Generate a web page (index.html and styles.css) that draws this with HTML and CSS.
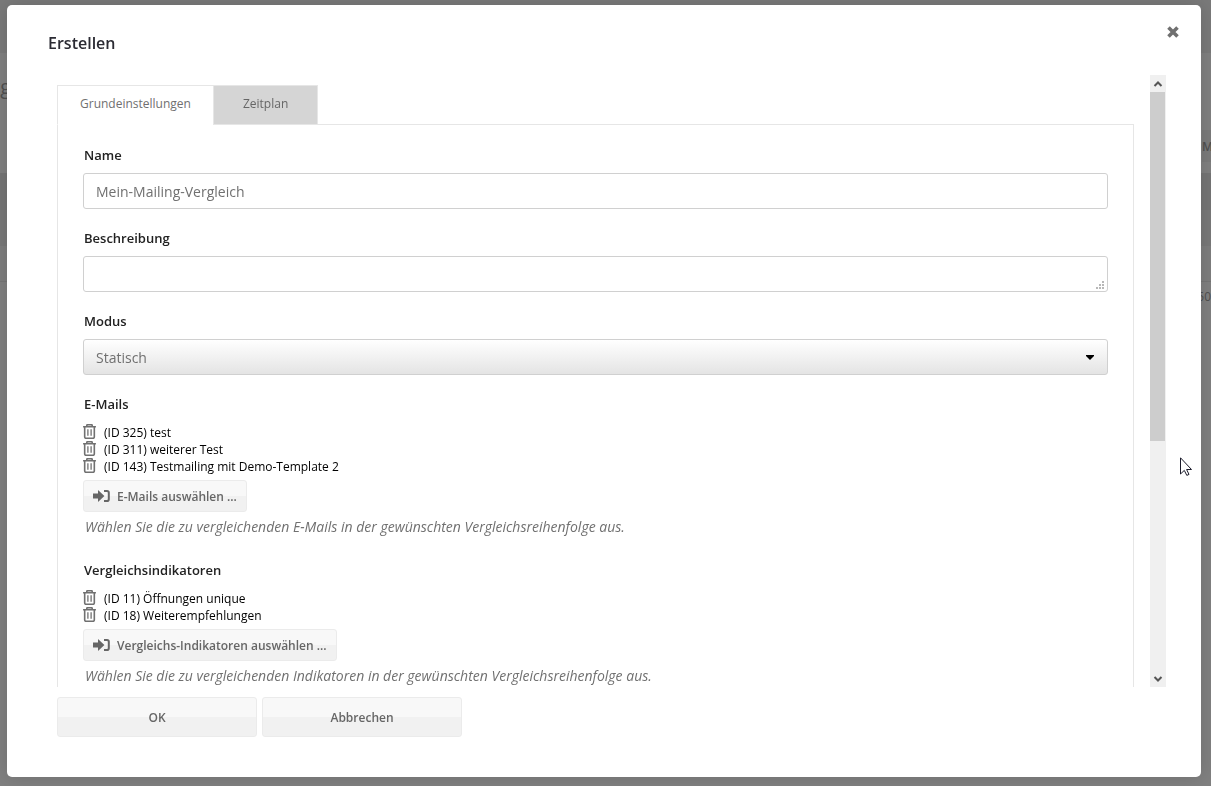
FILE: index.html
```html
<!DOCTYPE html>
<html lang="de">

<head>
    <meta charset="UTF-8">
    <meta name="viewport" content="width=device-width, initial-scale=1.0">
    <title>Erstellen</title>
    <link rel="stylesheet" href="styles.css">
</head>

<body>
    <!-- icons -->
    <svg class="sprite" aria-hidden="true">
        <symbol id="icon-trash" viewBox="0 0 12 14">
            <path d="M0 2.500h12M3.500 2.500V1.200Q3.500.7 4 .7h4q.5 0 .5.5v1.300M1.500 2.500v9.700q0 1.100 1.100 1.100h6.800q1.100 0 1.100-1.100V2.500" fill="none" stroke="currentColor" stroke-width="1.500" />
            <path d="M4.500 5v6M7.500 5v6" fill="none" stroke="currentColor" stroke-width="1.200" />
        </symbol>
        <symbol id="icon-select" viewBox="0 0 17 14">
            <path d="M0 4.600h5V1l6.400 6L5 13V9.400H0z" fill="currentColor" />
            <path d="M11 2h3q1.800 0 1.800 1.800v6.400q0 1.800-1.800 1.800h-3" fill="none" stroke="currentColor" stroke-width="2" />
        </symbol>
    </svg>

    <!-- page behind the dialog -->
    <div class="page">
        <div class="page-bar"></div>
        <div class="page-title">rg</div>
        <div class="page-head"><span>M</span></div>
        <div class="page-filter"></div>
        <div class="page-row"></div>
        <div class="page-values"><span>50</span></div>
    </div>

    <div class="overlay">
        <form class="dialog" role="dialog" aria-labelledby="dialog-title">
            <header class="dialog-header">
                <h1 id="dialog-title">Erstellen</h1>
                <button class="close" type="button" aria-label="Schließen">
                    <svg width="14" height="14" viewBox="0 0 14 14">
                        <path d="M2.500 2.500l9 9M11.500 2.500l-9 9" stroke="currentColor" stroke-width="3.600" />
                    </svg>
                </button>
            </header>

            <div class="dialog-body">
                <div class="scroll-content">
                    <div class="tabs" role="tablist">
                        <button class="tab active" type="button" role="tab" aria-selected="true">Grundeinstellungen</button>
                        <button class="tab" type="button" role="tab" aria-selected="false">Zeitplan</button>
                    </div>
                    <div class="panel" role="tabpanel">
                        <div class="field">
                            <label for="name">Name</label>
                            <input class="control" id="name" type="text" value="Mein-Mailing-Vergleich">
                        </div>
                        <div class="field">
                            <label for="description">Beschreibung</label>
                            <div class="resizable">
                                <textarea class="control" id="description" rows="1"></textarea>
                                <svg class="grip" width="8" height="8" viewBox="0 0 8 8" fill="#b8b8b8" aria-hidden="true">
                                    <path d="M6 0h2v2H6zM3 3h2v2H3zM6 3h2v2H6zM0 6h2v2H0zM3 6h2v2H3zM6 6h2v2H6z" />
                                </svg>
                            </div>
                        </div>
                        <div class="field">
                            <label for="mode">Modus</label>
                            <select class="control" id="mode">
                                <option>Statisch</option>
                            </select>
                        </div>
                        <div class="field field-list">
                            <h2>E-Mails</h2>
                            <ul>
                                <li><svg class="trash"><use href="#icon-trash" /></svg>(ID 325) test</li>
                                <li><svg class="trash"><use href="#icon-trash" /></svg>(ID 311) weiterer Test</li>
                                <li><svg class="trash"><use href="#icon-trash" /></svg>(ID 143) Testmailing mit Demo-Template 2</li>
                            </ul>
                            <button class="btn btn-select" type="button"><svg class="select-icon"><use href="#icon-select" /></svg>E-Mails auswählen ...</button>
                            <p class="hint">Wählen Sie die zu vergleichenden E-Mails in der gewünschten Vergleichsreihenfolge aus.</p>
                        </div>
                        <div class="field field-list">
                            <h2>Vergleichsindikatoren</h2>
                            <ul>
                                <li><svg class="trash"><use href="#icon-trash" /></svg>(ID 11) Öffnungen unique</li>
                                <li><svg class="trash"><use href="#icon-trash" /></svg>(ID 18) Weiterempfehlungen</li>
                            </ul>
                            <button class="btn btn-select" type="button"><svg class="select-icon"><use href="#icon-select" /></svg>Vergleichs-Indikatoren auswählen ...</button>
                            <p class="hint">Wählen Sie die zu vergleichenden Indikatoren in der gewünschten Vergleichsreihenfolge aus.</p>
                        </div>
                    </div>
                </div>
                <div class="scrollbar" aria-hidden="true">
                    <svg class="scroll-arrow" viewBox="0 0 16 17">
                        <path d="M4.500 11L8 7.500l3.500 3.500" />
                    </svg>
                    <div class="scroll-track">
                        <div class="scroll-thumb"></div>
                    </div>
                    <svg class="scroll-arrow" viewBox="0 0 16 17">
                        <path d="M4.500 7L8 10.500l3.500-3.500" />
                    </svg>
                </div>
            </div>

            <footer class="dialog-footer">
                <button class="btn" type="submit">OK</button>
                <button class="btn" type="button">Abbrechen</button>
            </footer>
        </form>
    </div>

    <svg class="cursor" width="12" height="19" viewBox="0 0 12 19" aria-hidden="true">
        <path d="M.5.8v16.200l3.800-3.600 2.500 5 2.200-1-2.400-4.900h4.900z" fill="#fff" stroke="#1b1b2b" />
    </svg>
</body>

</html>
```
FILE: styles.css
```css
* {
    box-sizing: border-box;
}

body {
    margin: 0;
    height: 100vh;
    overflow: hidden;
    background: #808080;
    color: #000;
    font-family: "Open Sans", sans-serif;
    font-size: 12px;
}

h1,
h2,
p,
ul {
    margin: 0;
    padding: 0;
}

button,
input,
select,
textarea {
    font-family: inherit;
}

.sprite {
    position: absolute;
    width: 0;
    height: 0;
}

/* page behind the dialog */
.page {
    color: #505050;
}

.page-bar {
    height: 53px;
    background: #7a7a7a;
}

.page-title {
    height: 77px;
    margin-left: -8px;
    font-size: 20px;
    line-height: 68px;
}

.page-head,
.page-values {
    display: flex;
    justify-content: flex-end;
    line-height: 34px;
}

.page-head {
    height: 43px;
    font-weight: 600;
}

.page-head span {
    width: 9px;
    background: #7b7b7b;
    height: 32px;
}

.page-filter {
    height: 37px;
    background: #757575;
}

.page-row {
    height: 72px;
    border-bottom: 1px solid #767676;
    background: linear-gradient(#797979 50%, #7e7e7e 50%);
}

.page-values {
    line-height: 30px;
}

/* dialog */
.overlay {
    position: fixed;
    inset: 0;
    display: flex;
    padding: 5px 10px 9px 7px;
}

.dialog {
    flex: 1;
    display: flex;
    flex-direction: column;
    min-width: 0;
    padding: 0 35px 40px 50px;
    border-radius: 5px;
    background: #fff;
    box-shadow: 0 0 20px rgba(0, 0, 0, .15);
}

.dialog-header {
    display: flex;
    justify-content: space-between;
    align-items: flex-start;
    height: 70px;
    margin: 0 -15px 0 -10px;
    padding-top: 20px;
}

.dialog-header h1 {
    padding-left: 1px;
    color: #2b2b33;
    font-size: 16px;
    font-weight: 600;
    line-height: 36px;
}

.close {
    display: flex;
    padding: 0 1px;
    border: 0;
    background: none;
    color: #707070;
}

.dialog-body {
    flex: 1;
    display: flex;
    gap: 16px;
    min-height: 0;
}

.scroll-content {
    flex: 1;
    min-width: 0;
    padding-top: 10px;
    overflow: hidden;
}

.tabs {
    display: flex;
}

.tab {
    height: 40px;
    padding: 0 29px 3px;
    border: 1px solid #e6e6e6;
    background: #d5d5d5;
    color: #666;
    font-size: 12px;
}

.tab.active {
    padding: 0 22px 3px;
    border-right: 0;
    border-bottom-color: #fff;
    background: #fff;
    color: #707070;
    z-index: 1;
}

.panel {
    margin-top: -1px;
    padding: 20px 25px;
    border: 1px solid #e6e6e6;
}

/* form fields */
.field {
    display: flex;
    flex-direction: column;
    align-items: stretch;
    gap: 8px;
    margin-bottom: 19px;
}

.field label,
.field h2 {
    padding-left: 1px;
    color: #222;
    font-size: 13px;
    font-weight: 600;
    line-height: 20px;
}

.control {
    display: block;
    width: 100%;
    height: 36px;
    padding: 0 12px;
    border: 1px solid #d0d0d0;
    border-radius: 3px;
    background: #fff;
    color: #707070;
    font-size: 14px;
}

textarea.control {
    padding: 7px 12px;
    resize: none;
}

select.control {
    appearance: none;
    background: url("data:image/svg+xml,%3Csvg xmlns='http://www.w3.org/2000/svg' width='8' height='5'%3E%3Cpath d='M0 0h8v1L4 5 0 1z'/%3E%3C/svg%3E") no-repeat right 13px center, linear-gradient(#fff, #e4e4e4);
}

.resizable {
    position: relative;
}

.grip {
    position: absolute;
    right: 4px;
    bottom: 3px;
}

.field-list {
    align-items: flex-start;
    gap: 5px;
    margin-bottom: 23px;
}

.field-list ul {
    padding-top: 5px;
    list-style: none;
}

.field-list li {
    display: flex;
    align-items: flex-start;
    gap: 8px;
    line-height: 17px;
}

.trash {
    width: 13px;
    height: 15px;
    color: #707070;
}

.btn {
    width: 200px;
    height: 40px;
    border: 1px solid #ebebeb;
    border-radius: 3px;
    background: linear-gradient(#f8f8f8 50%, #f1f1f1 50%);
    color: #666;
    font-size: 12px;
    font-weight: 600;
}

.btn-select {
    display: flex;
    align-items: center;
    gap: 7px;
    width: auto;
    height: 32px;
    padding: 0 9px;
}

.select-icon {
    width: 17px;
    height: 14px;
}

.hint {
    padding-left: 2px;
    color: #707070;
    font-size: 14px;
    font-style: italic;
    line-height: 20px;
}

/* scrollbar */
.scrollbar {
    display: flex;
    flex-direction: column;
    width: 16px;
    background: #f0f0f0;
}

.scroll-arrow {
    width: 16px;
    height: 17px;
    fill: none;
    stroke: #555;
    stroke-width: 2;
}

.scroll-track {
    flex: 1;
    padding-right: 1px;
}

.scroll-thumb {
    height: 60.4%;
    background: #cdcdcd;
}

.dialog-footer {
    display: flex;
    gap: 5px;
    margin-top: 10px;
}

.cursor {
    position: absolute;
    left: 1180px;
    top: 457px;
}
```
